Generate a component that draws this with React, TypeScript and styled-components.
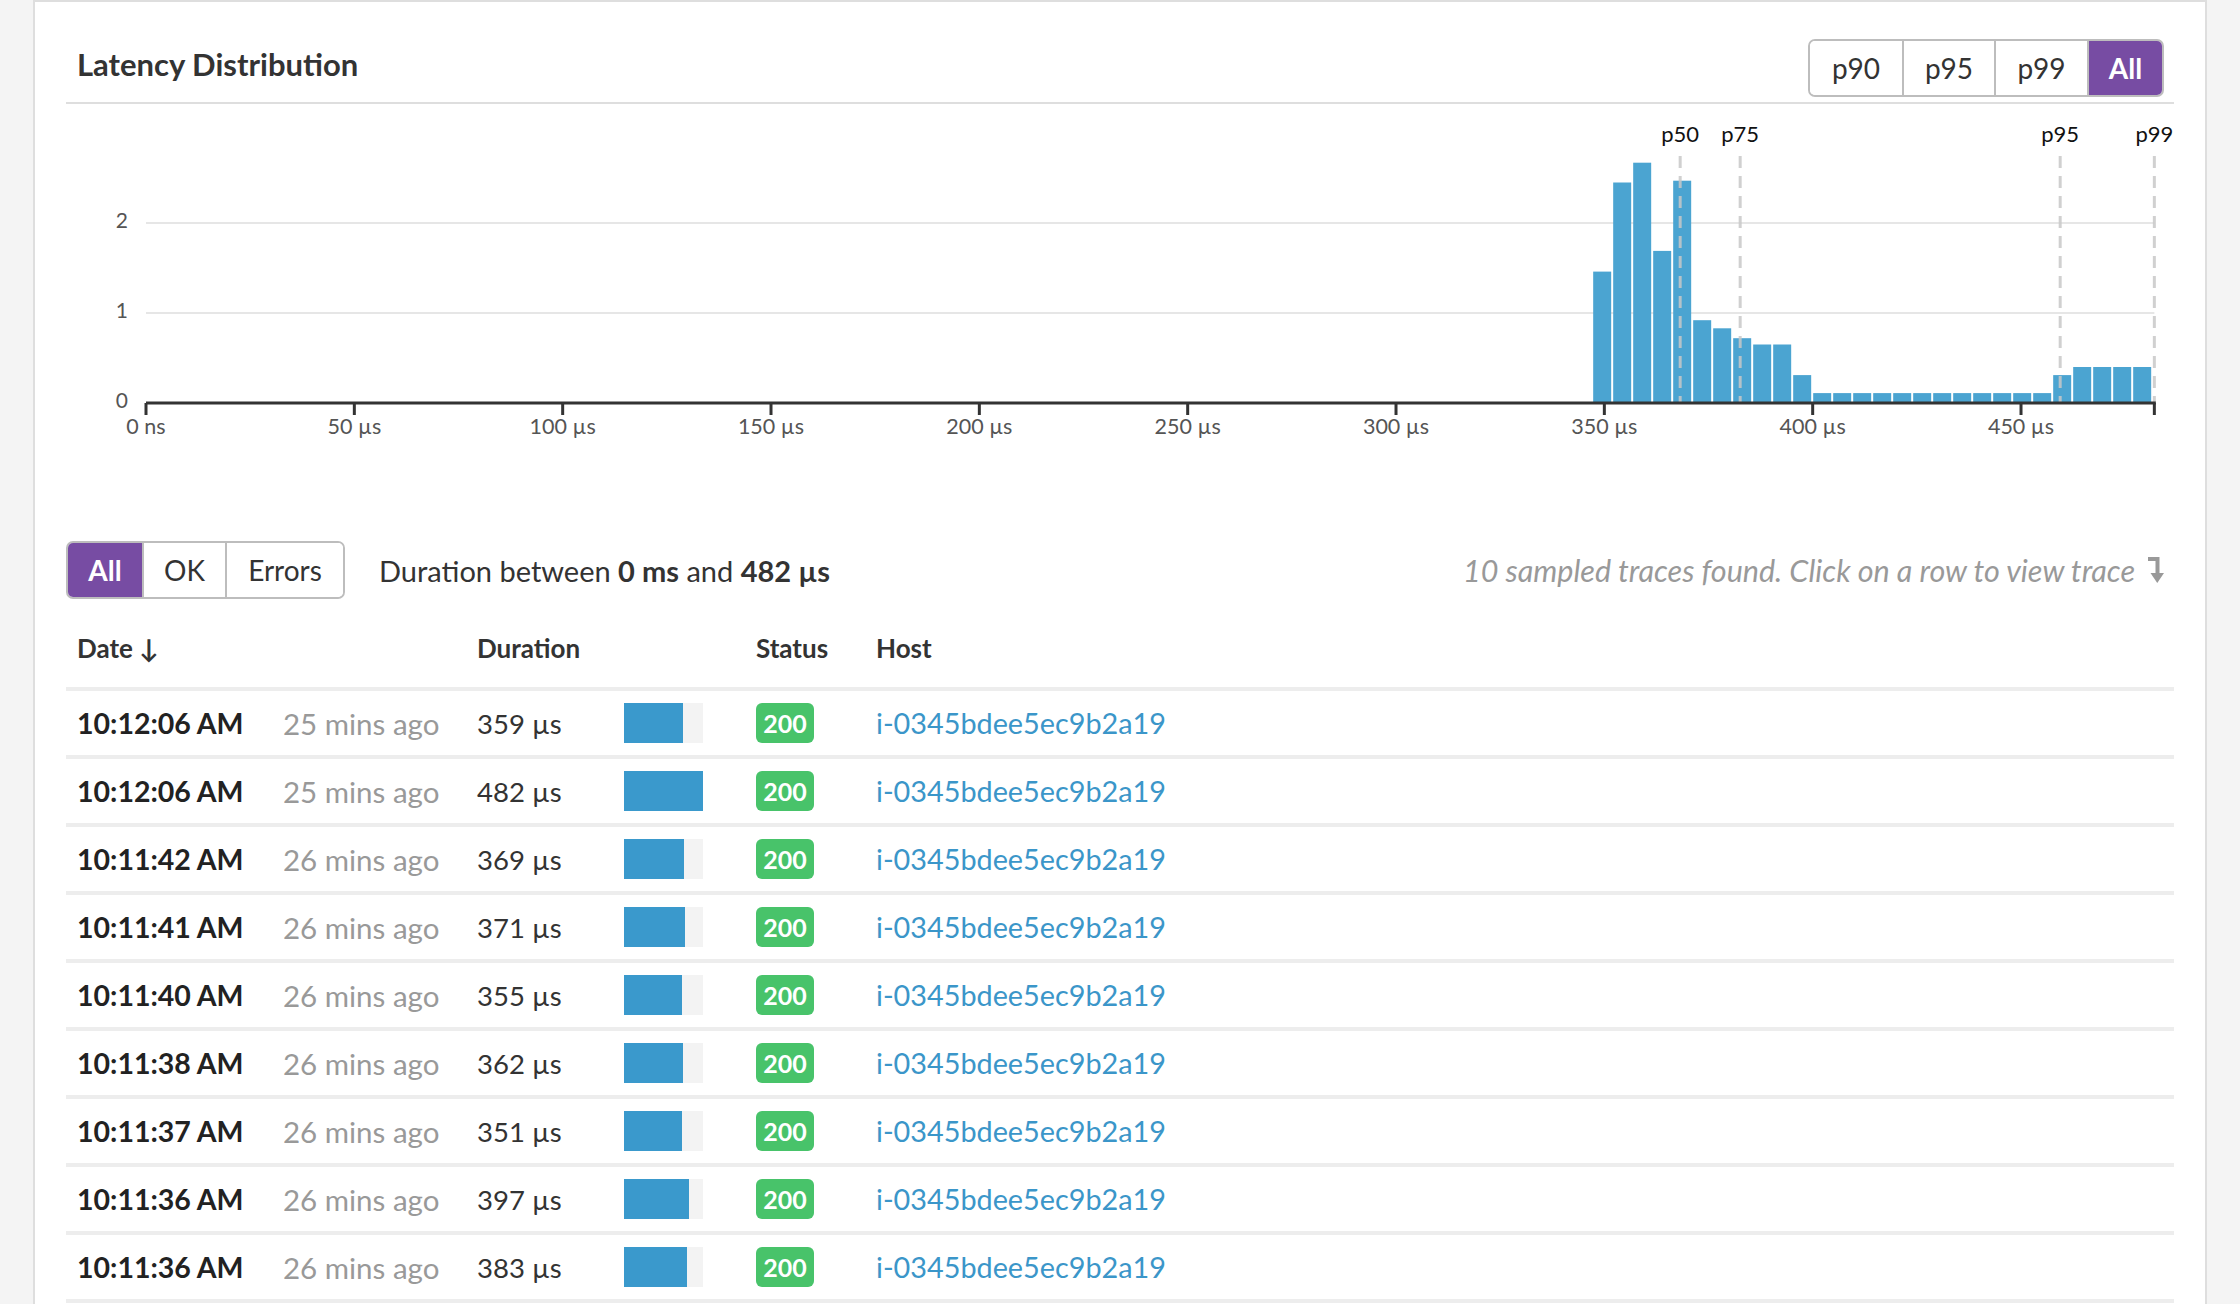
import React from "react";
import styled, { createGlobalStyle } from "styled-components";

const GlobalStyle = createGlobalStyle`
  html, body {
    margin: 0;
    padding: 0;
    background: #f4f4f4;
    font-family: Lato, "Open Sans", sans-serif;
    color: #333;
  }
`;

const Panel = styled.div`
  margin-left: 33px;
  width: 2174px;
  box-sizing: border-box;
  background: #fff;
  border: 2px solid #dedede;
  border-bottom: none;
  padding: 0 31px;
  min-height: 1310px;
`;

const Header = styled.div`
  display: flex;
  align-items: center;
  justify-content: space-between;
  padding: 37px 10px 5px 11px;
  border-bottom: 2px solid #dedede;
`;

const Title = styled.h2`
  margin: 0 0 8px 0;
  font-size: 31px;
  font-weight: 700;
  color: #333;
`;

const SegGroup = styled.div`
  display: flex;
  height: 54px;
  border: 2px solid #bdbdbd;
  border-radius: 7px;
  overflow: hidden;
`;

const SegButton = styled.button<{ $active?: boolean; $w: number }>`
  font-family: inherit;
  font-size: 28px;
  font-weight: ${(p) => (p.$active ? 700 : 400)};
  color: ${(p) => (p.$active ? "#fff" : "#333")};
  background: ${(p) => (p.$active ? "#774ca3" : "#fff")};
  border: none;
  border-left: 2px solid #bdbdbd;
  width: ${(p) => p.$w}px;
  padding: 0;
  margin: 0;
  cursor: pointer;
  &:first-child {
    border-left: none;
  }
`;

const ChartSvg = styled.svg`
  display: block;
  width: 2108px;
  height: 438px;
`;

const FilterRow = styled.div`
  display: flex;
  align-items: center;
  height: 56px;
`;

const DurationText = styled.div`
  margin-left: 34px;
  font-size: 29px;
  color: #333;
  b {
    font-weight: 700;
  }
`;

const Info = styled.div`
  margin-left: auto;
  margin-right: 10px;
  display: flex;
  align-items: center;
  gap: 12px;
  font-size: 30.5px;
  font-style: italic;
  color: #999;
`;

const Grid = styled.div`
  display: grid;
  grid-template-columns: 206px 194px 147px 132px 120px 1fr;
  align-items: center;
  padding-left: 11px;
`;

const HeadRow = styled(Grid)`
  margin-top: 22px;
  height: 71px;
  padding-bottom: 12px;
  box-sizing: border-box;
  border-bottom: 4px solid #ededed;
`;

const HeadCell = styled.div<{ $span?: number }>`
  grid-column: span ${(p) => p.$span ?? 1};
  font-size: 26px;
  font-weight: 700;
  color: #333;
`;

const Row = styled(Grid)`
  height: 68px;
  box-sizing: border-box;
  border-bottom: 4px solid #ededed;
  cursor: pointer;
`;

const Time = styled.div`
  font-size: 28.5px;
  font-weight: 700;
  color: #222;
`;

const Ago = styled.div`
  font-size: 29.5px;
  color: #999;
`;

const Dur = styled.div`
  font-size: 27.5px;
  color: #333;
`;

const BarTrack = styled.div`
  width: 79px;
  height: 40px;
  background: #f3f3f3;
  display: flex;
`;

const BarFill = styled.div`
  height: 100%;
  background: #3a99cc;
`;

const Badge = styled.div`
  width: 58px;
  height: 40px;
  border-radius: 6px;
  background: #48c36a;
  color: #fff;
  font-size: 25px;
  font-weight: 700;
  display: flex;
  align-items: center;
  justify-content: center;
`;

const Host = styled.a`
  font-size: 28.8px;
  color: #3b96c9;
  text-decoration: none;
`;

const heights = [
  1.46, 2.45, 2.67, 1.69, 2.47, 0.92, 0.83, 0.72, 0.65, 0.65, 0.31,
  0.11, 0.11, 0.11, 0.11, 0.11, 0.11, 0.11, 0.11, 0.11, 0.11, 0.11, 0.11,
  0.31, 0.4, 0.4, 0.4, 0.4,
];

const X0 = 80;
const PX = 4.1667;
const xOf = (us: number) => X0 + us * PX;
const yOf = (v: number) => 299 - v * 90;

const percentiles = [
  { label: "p50", us: 368.2 },
  { label: "p75", us: 382.6 },
  { label: "p95", us: 459.4 },
  { label: "p99", us: 482 },
];

const ticks = [
  { us: 0, label: "0 ns" },
  { us: 50, label: "50 µs" },
  { us: 100, label: "100 µs" },
  { us: 150, label: "150 µs" },
  { us: 200, label: "200 µs" },
  { us: 250, label: "250 µs" },
  { us: 300, label: "300 µs" },
  { us: 350, label: "350 µs" },
  { us: 400, label: "400 µs" },
  { us: 450, label: "450 µs" },
];

function Chart() {
  const binStart = 347.2;
  const binW = 4.8;
  return (
    <ChartSvg viewBox="0 0 2108 438">
      {[1, 2].map((v) => (
        <line key={v} x1={X0} x2={xOf(482)} y1={yOf(v)} y2={yOf(v)} stroke="#e6e6e6" strokeWidth={2} />
      ))}
      {[0, 1, 2].map((v) => (
        <text key={v} x={62} y={yOf(v)} textAnchor="end" dominantBaseline="middle" fontFamily="Lato, sans-serif" fontSize={21} fill="#555">
          {v}
        </text>
      ))}
      {heights.map((h, i) => {
        const x1 = xOf(binStart + i * binW);
        const x2 = xOf(binStart + (i + 1) * binW);
        return <rect key={i} x={x1 + 0.5} y={yOf(h)} width={x2 - x1 - 2} height={h * 90} fill="#4ba4d1" />;
      })}
      {percentiles.map((p) => (
        <g key={p.label}>
          <line x1={xOf(p.us)} x2={xOf(p.us)} y1={52} y2={298} stroke="#c8c8c8" strokeOpacity={0.85} strokeWidth={3} strokeDasharray="12 8" />
          <text x={xOf(p.us)} y={32} textAnchor="middle" dominantBaseline="middle" fontFamily="Lato, sans-serif" fontSize={22} fill="#111">
            {p.label}
          </text>
        </g>
      ))}
      <line x1={X0} x2={xOf(482) + 1.5} y1={299} y2={299} stroke="#333" strokeWidth={3} />
      {[...ticks.map((t) => t.us), 482].map((us) => (
        <line key={us} x1={xOf(us)} x2={xOf(us)} y1={299} y2={311} stroke="#333" strokeWidth={3} />
      ))}
      {ticks.map((t) => (
        <text key={t.us} x={xOf(t.us)} y={325} textAnchor="middle" dominantBaseline="middle" fontFamily="Lato, sans-serif" fontSize={21.5} fill="#555">
          {t.label}
        </text>
      ))}
    </ChartSvg>
  );
}

const rows = [
  { time: "10:12:06 AM", ago: "25 mins ago", dur: 359 },
  { time: "10:12:06 AM", ago: "25 mins ago", dur: 482 },
  { time: "10:11:42 AM", ago: "26 mins ago", dur: 369 },
  { time: "10:11:41 AM", ago: "26 mins ago", dur: 371 },
  { time: "10:11:40 AM", ago: "26 mins ago", dur: 355 },
  { time: "10:11:38 AM", ago: "26 mins ago", dur: 362 },
  { time: "10:11:37 AM", ago: "26 mins ago", dur: 351 },
  { time: "10:11:36 AM", ago: "26 mins ago", dur: 397 },
  { time: "10:11:36 AM", ago: "26 mins ago", dur: 383 },
];

function LevelDown() {
  return (
    <svg width="17" height="28" viewBox="0 0 17 28">
      <path d="M1 3 H10.5 V19" fill="none" stroke="#999" strokeWidth={4} />
      <path d="M3.5 17 H17 L10.25 27 Z" fill="#999" />
    </svg>
  );
}

export default function App() {
  return (
    <>
      <GlobalStyle />
      <Panel>
        <Header>
          <Title>Latency Distribution</Title>
          <SegGroup>
            <SegButton $w={92}>p90</SegButton>
            <SegButton $w={92}>p95</SegButton>
            <SegButton $w={93}>p99</SegButton>
            <SegButton $w={75} $active>All</SegButton>
          </SegGroup>
        </Header>
        <Chart />
        <FilterRow>
          <SegGroup>
            <SegButton $w={74} $active>All</SegButton>
            <SegButton $w={83}>OK</SegButton>
            <SegButton $w={118}>Errors</SegButton>
          </SegGroup>
          <DurationText>
            Duration between <b>0 ms</b> and <b>482 µs</b>
          </DurationText>
          <Info>
            10 sampled traces found. Click on a row to view trace
            <LevelDown />
          </Info>
        </FilterRow>
        <HeadRow>
          <HeadCell $span={2}>Date ↓</HeadCell>
          <HeadCell $span={2}>Duration</HeadCell>
          <HeadCell>Status</HeadCell>
          <HeadCell>Host</HeadCell>
        </HeadRow>
        {rows.map((r, i) => (
          <Row key={i}>
            <Time>{r.time}</Time>
            <Ago>{r.ago}</Ago>
            <Dur>{r.dur} µs</Dur>
            <BarTrack>
              <BarFill style={{ width: `${(r.dur / 482) * 100}%` }} />
            </BarTrack>
            <div>
              <Badge>200</Badge>
            </div>
            <Host href="#">i-0345bdee5ec9b2a19</Host>
          </Row>
        ))}
      </Panel>
    </>
  );
}
